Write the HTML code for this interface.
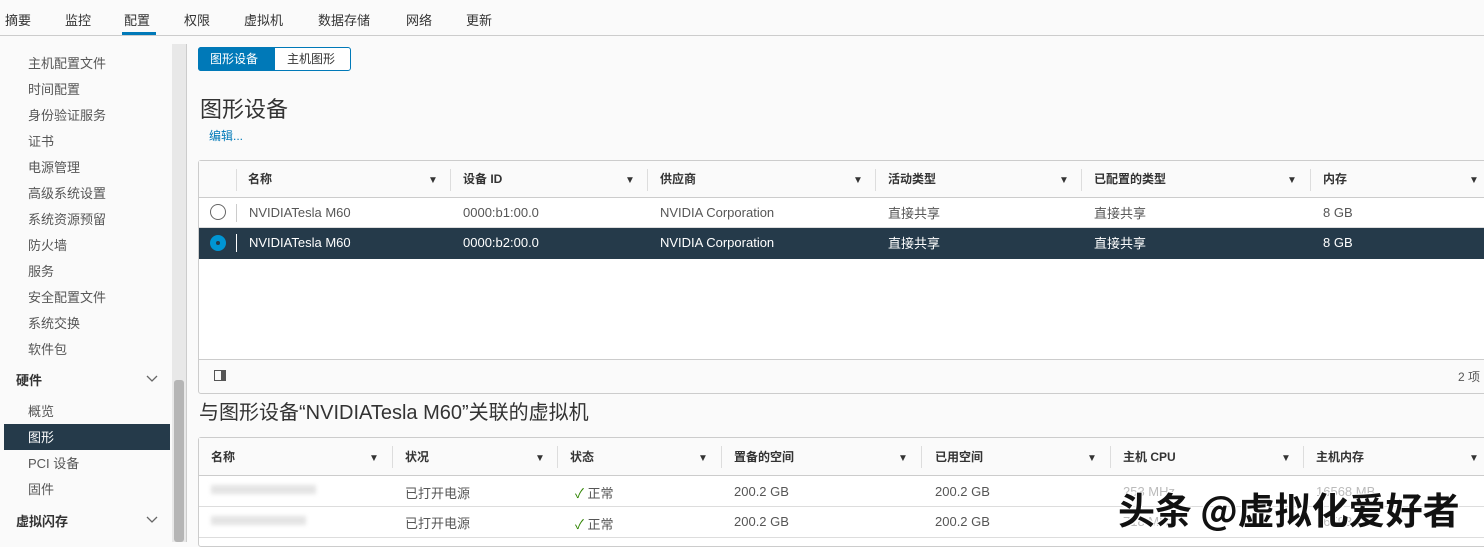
<!DOCTYPE html>
<html><head><meta charset="utf-8"><style>
*{margin:0;padding:0;box-sizing:border-box}
body{width:1484px;height:542px;overflow:hidden;background:#fafafa;font-family:"Liberation Sans","Noto Sans CJK SC",sans-serif;font-size:13px;color:#565656;position:relative}
.a{position:absolute;white-space:nowrap}
.nav{left:0;top:0;width:1484px;height:36px;border-bottom:1px solid #ccc}
.nav span{position:absolute;top:10px;font-size:13px;color:#333}
.side span{position:absolute;left:28px;font-size:13px;color:#565656}
.tbl{position:absolute;background:#fff;border:1px solid #ccc;border-radius:3px}
.th{position:absolute;top:0;height:37px;border-bottom:1px solid #ccc;width:100%}
.hc{position:absolute;font-size:12px;font-weight:bold;color:#333}
.sep{position:absolute;width:1px;background:#ddd}
.f{position:absolute;font-size:10px;color:#333}
.row{position:absolute;left:0;width:100%;border-bottom:1px solid #ddd}
.c{position:absolute;font-size:13px}
.chev{position:absolute;left:146px}
</style></head><body>
<div class="a nav">
<span style="left:5px">摘要</span><span style="left:65px">监控</span><span style="left:124px">配置</span><span style="left:184px">权限</span><span style="left:244px">虚拟机</span><span style="left:318px">数据存储</span><span style="left:406px">网络</span><span style="left:466px">更新</span>
<div style="position:absolute;left:122px;top:32px;width:34px;height:3px;background:#0079b8"></div>
</div>
<div class="side">
<span style="top:53px">主机配置文件</span><span style="top:79px">时间配置</span><span style="top:105px">身份验证服务</span><span style="top:131px">证书</span><span style="top:157px">电源管理</span><span style="top:183px">高级系统设置</span><span style="top:209px">系统资源预留</span><span style="top:235px">防火墙</span><span style="top:261px">服务</span><span style="top:287px">安全配置文件</span><span style="top:313px">系统交换</span><span style="top:339px">软件包</span>
<span style="top:370px;left:16px;font-weight:bold;color:#333">硬件</span>
<svg class="chev" style="top:375px" width="12" height="8"><path d="M1 1l5 5 5-5" fill="none" stroke="#666" stroke-width="1.3"/></svg>
<span style="top:401px">概览</span>
<div style="position:absolute;left:4px;top:424px;width:166px;height:26px;background:#253a4a"></div>
<span style="top:427px;color:#fff">图形</span>
<span style="top:453px">PCI 设备</span><span style="top:479px">固件</span>
<span style="top:511px;left:16px;font-weight:bold;color:#333">虚拟闪存</span>
<svg class="chev" style="top:516px" width="12" height="8"><path d="M1 1l5 5 5-5" fill="none" stroke="#666" stroke-width="1.3"/></svg>
</div>
<div class="a" style="left:172px;top:44px;width:14px;height:498px;background:#e8e8e8"></div>
<div class="a" style="left:174px;top:380px;width:10px;height:162px;background:#b5b5b5;border-radius:3px"></div>
<div class="a" style="left:186px;top:44px;width:1px;height:498px;background:#ccc"></div>

<div class="a" style="left:198px;top:47px;width:153px;height:24px;border:1px solid #0079b8;border-radius:3px;background:#fff"></div>
<div class="a" style="left:198px;top:47px;width:77px;height:24px;background:#0079b8;border-radius:3px 0 0 3px;color:#fff;font-size:12px;padding:3px 0 0 12px">图形设备</div>
<div class="a" style="left:287px;top:50px;font-size:12px;color:#333">主机图形</div>
<div class="a" style="left:200px;top:92px;font-size:22px;color:#333">图形设备</div>
<div class="a" style="left:209px;top:127px;font-size:12px;color:#0079b8">编辑...</div>

<div class="tbl" style="left:198px;top:160px;width:1300px;height:234px;background:#fafafa">
<div class="th" style="background:#fafafa"></div>
<div style="position:absolute;left:0;top:37px;width:100%;height:161px;background:#fff"></div>
<div class="sep" style="left:37px;top:8px;height:22px"></div>
<span class="hc" style="left:49px;top:9px">名称</span><span class="f" style="left:229px;top:14px">▼</span><div class="sep" style="left:251px;top:8px;height:22px"></div>
<span class="hc" style="left:264px;top:9px">设备 ID</span><span class="f" style="left:426px;top:14px">▼</span><div class="sep" style="left:448px;top:8px;height:22px"></div>
<span class="hc" style="left:461px;top:9px">供应商</span><span class="f" style="left:654px;top:14px">▼</span><div class="sep" style="left:676px;top:8px;height:22px"></div>
<span class="hc" style="left:689px;top:9px">活动类型</span><span class="f" style="left:860px;top:14px">▼</span><div class="sep" style="left:882px;top:8px;height:22px"></div>
<span class="hc" style="left:895px;top:9px">已配置的类型</span><span class="f" style="left:1088px;top:14px">▼</span><div class="sep" style="left:1111px;top:8px;height:22px"></div>
<span class="hc" style="left:1124px;top:9px">内存</span><span class="f" style="left:1270px;top:14px">▼</span>
<div class="row" style="top:37px;height:30px;background:#fff"></div>
<div style="position:absolute;left:11px;top:43px;width:16px;height:16px;border:1px solid #666;border-radius:50%"></div>
<div class="sep" style="left:37px;top:43px;height:18px;background:#ccc"></div>
<span class="c" style="left:50px;top:44px">NVIDIATesla M60</span><span class="c" style="left:264px;top:44px">0000:b1:00.0</span><span class="c" style="left:461px;top:44px">NVIDIA Corporation</span><span class="c" style="left:689px;top:42px">直接共享</span><span class="c" style="left:895px;top:42px">直接共享</span><span class="c" style="left:1124px;top:44px">8 GB</span>
<div class="row" style="top:67px;height:31px;background:#253a4a;border:none"></div>
<div style="position:absolute;left:11px;top:74px;width:16px;height:16px;background:#0095d3;border-radius:50%"><div style="margin:6px;width:4px;height:4px;background:#253a4a;border-radius:50%"></div></div>
<div class="sep" style="left:37px;top:73px;height:18px;background:#fff"></div>
<span class="c" style="left:50px;top:74px;color:#fff">NVIDIATesla M60</span><span class="c" style="left:264px;top:74px;color:#fff">0000:b2:00.0</span><span class="c" style="left:461px;top:74px;color:#fff">NVIDIA Corporation</span><span class="c" style="left:689px;top:72px;color:#fff">直接共享</span><span class="c" style="left:895px;top:72px;color:#fff">直接共享</span><span class="c" style="left:1124px;top:74px;color:#fff">8 GB</span>
<div style="position:absolute;left:0;top:198px;width:100%;height:1px;background:#ccc"></div>
<div style="position:absolute;left:15px;top:209px;width:12px;height:11px;border:1px solid #555"><div style="position:absolute;right:0;top:0;width:4px;height:9px;background:#555"></div></div>
<span class="c" style="left:1259px;top:207px;font-size:12px">2 项</span>
</div>

<div class="a" style="left:199px;top:396px;font-size:20px;color:#333">与图形设备“NVIDIATesla M60”关联的虚拟机</div>

<div class="tbl" style="left:198px;top:437px;width:1300px;height:110px">
<div class="th" style="background:#fafafa;height:38px"></div>
<span class="hc" style="left:12px;top:10px">名称</span><span class="f" style="left:170px;top:15px">▼</span><div class="sep" style="left:193px;top:8px;height:22px"></div>
<span class="hc" style="left:206px;top:10px">状况</span><span class="f" style="left:336px;top:15px">▼</span><div class="sep" style="left:358px;top:8px;height:22px"></div>
<span class="hc" style="left:371px;top:10px">状态</span><span class="f" style="left:499px;top:15px">▼</span><div class="sep" style="left:522px;top:8px;height:22px"></div>
<span class="hc" style="left:535px;top:10px">置备的空间</span><span class="f" style="left:699px;top:15px">▼</span><div class="sep" style="left:722px;top:8px;height:22px"></div>
<span class="hc" style="left:736px;top:10px">已用空间</span><span class="f" style="left:888px;top:15px">▼</span><div class="sep" style="left:911px;top:8px;height:22px"></div>
<span class="hc" style="left:924px;top:10px">主机 CPU</span><span class="f" style="left:1082px;top:15px">▼</span><div class="sep" style="left:1104px;top:8px;height:22px"></div>
<span class="hc" style="left:1117px;top:10px">主机内存</span><span class="f" style="left:1270px;top:15px">▼</span>
<div class="row" style="top:38px;height:31px"></div>
<div style="position:absolute;left:12px;top:47px;width:105px;height:9px;background:#e4e4e4;filter:blur(2px)"></div>
<span class="c" style="left:206px;top:45px">已打开电源</span><span class="c" style="left:376px;top:45px"><span style="color:#2f8400">✓</span> 正常</span><span class="c" style="left:535px;top:46px">200.2 GB</span><span class="c" style="left:736px;top:46px">200.2 GB</span><span class="c" style="left:924px;top:46px;color:#bbb">253 MHz</span><span class="c" style="left:1117px;top:46px;color:#bbb">16568 MB</span>
<div class="row" style="top:69px;height:31px"></div>
<div style="position:absolute;left:12px;top:78px;width:95px;height:9px;background:#e4e4e4;filter:blur(2px)"></div>
<span class="c" style="left:206px;top:75px">已打开电源</span><span class="c" style="left:376px;top:76px"><span style="color:#2f8400">✓</span> 正常</span><span class="c" style="left:535px;top:76px">200.2 GB</span><span class="c" style="left:736px;top:76px">200.2 GB</span><span class="c" style="left:924px;top:76px;color:#bbb">718 MHz</span><span class="c" style="left:1117px;top:76px;color:#bbb">16593 MB</span>
</div>
<div class="a" style="left:1118px;top:481px;font-size:37px;font-weight:bold;letter-spacing:0px;color:#111;font-family:'Noto Sans CJK SC',sans-serif;text-shadow:1px 1px 0 #fff,-1px -1px 0 #fff,1px -1px 0 #fff,-1px 1px 0 #fff">头条 @虚拟化爱好者</div>
</body></html>
